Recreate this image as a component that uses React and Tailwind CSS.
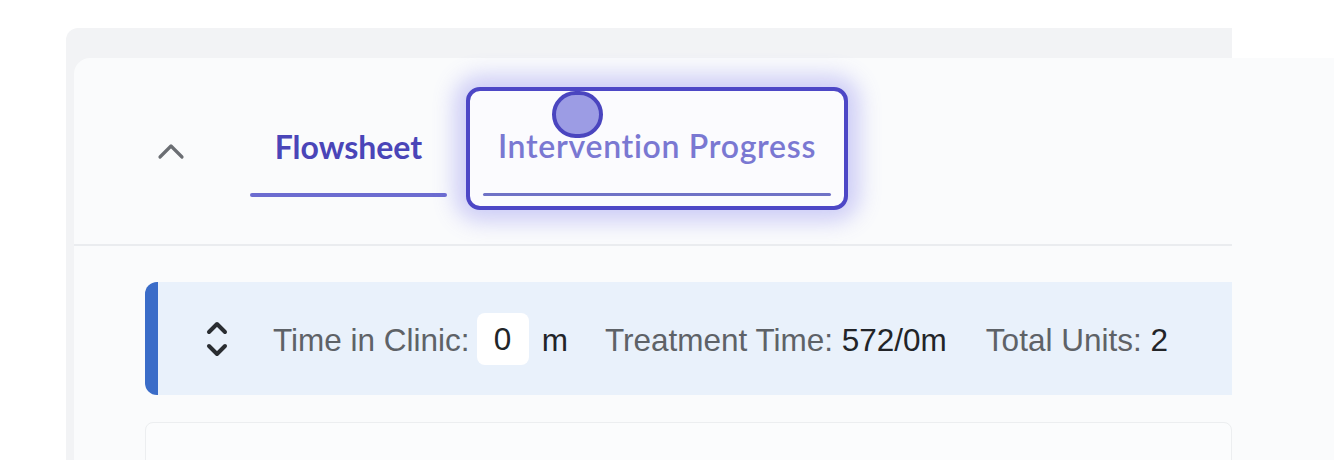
import React from 'react';

const ChevronUp = () => (
  <svg width="28" height="18" viewBox="0 0 28 18" fill="none">
    <path d="M3 15 L14 4 L25 15" stroke="#6b6e73" strokeWidth="3.2" strokeLinecap="round" strokeLinejoin="round" />
  </svg>
);

const ChevronsUpDown = () => (
  <svg width="24" height="42" viewBox="0 0 24 42" fill="none">
    <path d="M4 14 L12 6 L20 14" stroke="#2a2d31" strokeWidth="4" strokeLinecap="round" strokeLinejoin="round" />
    <path d="M4 28 L12 36 L20 28" stroke="#2a2d31" strokeWidth="4" strokeLinecap="round" strokeLinejoin="round" />
  </svg>
);

const App = () => {
  return (
    <div className="w-[1334px] h-[460px] bg-white overflow-hidden pt-[28px] pl-[66px]">
      {/* outer gray panel */}
      <div className="w-[1166px] h-[432px] bg-[#f2f3f5] rounded-tl-xl pt-[30px] pl-[8px]">
        {/* inner light panel */}
        <div className="relative w-[1260px] h-[402px] bg-[#fafbfc] rounded-tl-2xl">
          <div className="w-[1158px]">
            {/* Tabs */}
            <div className="relative h-[186px] flex items-start">
              <div className="ml-[83px] mt-[84px] w-[28px] h-[18px] flex">
                <ChevronUp />
              </div>
              <div className="ml-[65px] w-[197px] h-[139px] flex flex-col items-center justify-end">
                <span
                  className="text-[32px] font-bold text-[#4a45b8] leading-none mb-[30px]"
                  style={{ fontFamily: 'Lato, "Open Sans", sans-serif' }}
                >
                  Flowsheet
                </span>
                <div className="w-full h-[4px] bg-[#6c6cd0] rounded-sm" />
              </div>
              <div className="ml-[19px] mt-[29px] w-[382px] h-[123px] border-[4px] border-[#4d47c6] rounded-[14px] bg-[#fbfbfe] shadow-[0_0_22px_11px_rgba(110,105,235,0.32)] flex flex-col items-center justify-end px-[13px] pb-[10px]">
                <span
                  className="text-[32px] font-semibold text-[#7a78d2] leading-none mb-[31px] tracking-[0.7px]"
                  style={{ fontFamily: 'Lato, "Open Sans", sans-serif' }}
                >
                  Intervention Progress
                </span>
                <div className="w-full h-[3px] bg-[#6f72c6] rounded-sm" />
              </div>
              {/* cursor marker */}
              <div className="absolute left-[478px] top-[33px] w-[51px] h-[47px] rounded-full bg-[#9c9ce4] border-[4px] border-[#4a45bf]" />
            </div>
            <div className="h-[2px] bg-[#eaecef]" />

            {/* Stats bar */}
            <div
              className="ml-[71px] mt-[36px] h-[113px] flex items-center bg-[#e9f1fb] rounded-l-xl border-l-[13px] border-[#3a6cc8] pt-[4px] text-[31.5px]"
              style={{ fontFamily: '"Liberation Sans", Arial, sans-serif' }}
            >
              <div className="ml-[47px] -mt-[4px] flex items-center">
                <ChevronsUpDown />
              </div>
              <span className="ml-[44px] text-[#5e6267]">Time in Clinic:</span>
              <div className="ml-[7px] -mt-[4px] w-[52px] h-[52px] bg-white rounded-lg flex items-center justify-center text-[#222428] pt-[3px]">
                0
              </div>
              <span className="ml-[13px] text-[#222428]">m</span>
              <span className="ml-[37px] text-[#5e6267]">
                Treatment Time: <span className="text-[#222428]">572/0m</span>
              </span>
              <span className="ml-[39px] text-[#5e6267]">
                Total Units: <span className="text-[#222428]">2</span>
              </span>
            </div>

            {/* Next card */}
            <div className="ml-[71px] mt-[27px] h-[60px] bg-[#fbfcfd] border border-[#eceef0] rounded-t-lg" />
          </div>
        </div>
      </div>
    </div>
  );
};

export default App;
